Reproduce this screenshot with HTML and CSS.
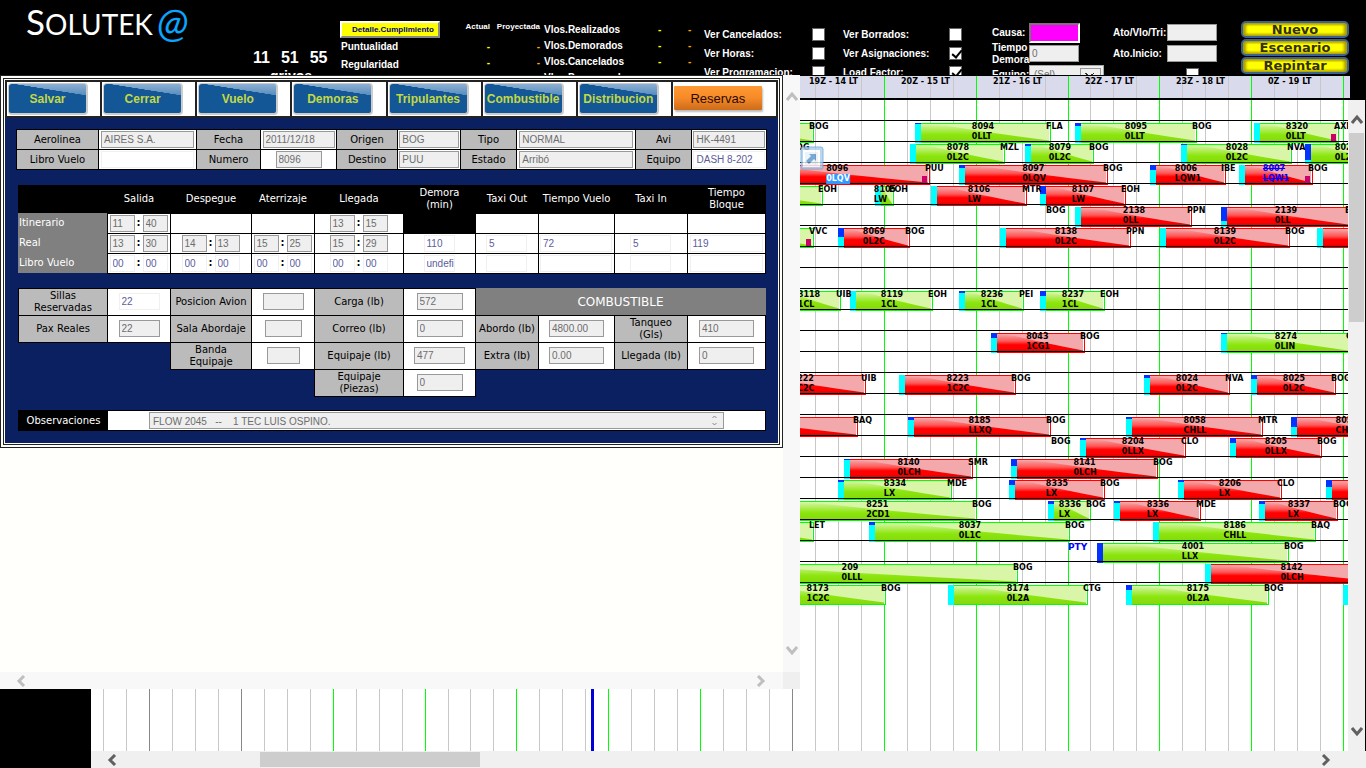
FILE: index.html
```html
<!DOCTYPE html>
<html lang="es">
<head>
    <meta charset="UTF-8">
    <meta name="viewport" content="width=device-width, initial-scale=1.0">
    <title>Solutek@</title>
    <link rel="stylesheet" href="styles.css">
</head>
<body>
    <header class="topbar">
        <div class="logo"><span class="logo-cap">S</span>OLUTEK<span class="logo-at">@</span></div>

        <div class="clock">
            <div class="clock-time"><span>11</span><span>51</span><span>55</span></div>
            <div class="clock-note">grivos</div>
        </div>

        <div class="stats">
            <button type="button" class="btn-detail">Detalle.Cumplimiento</button>
            <div>Puntualidad</div>
            <div>Regularidad</div>
            <div>Factor Ocupac.</div>
        </div>

        <div class="ratios">
            <span class="ratio-head">Actual</span><span class="ratio-head">Proyectada</span>
            <span class="now">-</span><span class="proj">-</span>
            <span class="now">-</span><span class="proj">-</span>
        </div>

        <div class="flights">
            <span>Vlos.Realizados</span><span class="now">-</span><span class="proj">-</span>
            <span>Vlos.Demorados</span><span class="now">-</span><span class="proj">-</span>
            <span>Vlos.Cancelados</span><span class="now">-</span><span class="proj">-</span>
            <span>Vlos.Programados</span><span class="now">-</span><span class="proj">-</span>
        </div>

        <div class="checks">
            <label for="verCancelados">Ver Cancelados:</label><input type="checkbox" id="verCancelados">
            <label for="verBorrados">Ver Borrados:</label><input type="checkbox" id="verBorrados">
            <label for="verHoras">Ver Horas:</label><input type="checkbox" id="verHoras">
            <label for="verAsignaciones">Ver Asignaciones:</label><input type="checkbox" id="verAsignaciones" checked>
            <label for="verProgramacion">Ver Programacion:</label><input type="checkbox" id="verProgramacion">
            <label for="loadFactor">Load Factor:</label><input type="checkbox" id="loadFactor" checked>
        </div>

        <div class="filters">
            <label for="causa">Causa:</label><input type="text" id="causa" class="causa">
            <label for="ato">Ato/Vlo/Tri:</label><input type="text" id="ato" disabled>
            <label for="tiempoDemora">Tiempo Demora</label><input type="text" id="tiempoDemora" value="0" disabled>
            <label for="atoInicio">Ato.Inicio:</label><input type="text" id="atoInicio" disabled>
            <label for="equipoSel">Equipo:</label>
            <div class="select-box"><select id="equipoSel"><option>(Sel)</option></select></div>
            <span></span><input type="checkbox" class="center" aria-label="Inicio">
        </div>

        <div class="actions">
            <button type="button">Nuevo</button>
            <button type="button">Escenario</button>
            <button type="button">Repintar</button>
        </div>
    </header>

    <main class="workspace">
        <div class="aircraft"></div>
        <div class="board">
            <div class="hours-wrap"><div class="hours" id="hours"></div></div>
            <div class="board-body">
                <div class="chart" id="chart"></div>
                <div class="vscroll">
                    <svg width="12" height="12" viewBox="0 0 12 12"><path d="M1 9 L6 3 L11 9"/></svg>
                    <div class="vthumb"></div>
                    <svg class="last" width="12" height="12" viewBox="0 0 12 12"><path d="M1 3 L6 9 L11 3"/></svg>
                </div>
            </div>
            <div class="hscroll">
                <svg width="12" height="12" viewBox="0 0 12 12"><path d="M9 1 L4 6 L9 11"/></svg>
                <div class="hthumb"></div>
                <svg class="last" width="12" height="12" viewBox="0 0 12 12"><path d="M3 1 L8 6 L3 11"/></svg>
            </div>
        </div>

        <section class="dialog">
            <div class="dialog-row">
                <div class="dialog-page">
                    <form class="flight-form">
                        <nav class="toolbar">
                            <div><button type="button">Salvar</button></div>
                            <div><button type="button">Cerrar</button></div>
                            <div><button type="button">Vuelo</button></div>
                            <div><button type="button">Demoras</button></div>
                            <div><button type="button">Tripulantes</button></div>
                            <div><button type="button">Combustible</button></div>
                            <div><button type="button">Distribucion</button></div>
                            <div><button type="button" class="reservas">Reservas</button></div>
                        </nav>

                        <div class="form-body">
                            <table class="info">
                                <colgroup>
                                    <col class="c82"><col class="c98"><col class="c64"><col class="c76"><col class="c61"><col class="c63"><col class="c56"><col class="c119"><col class="c56"><col class="c75">
                                </colgroup>
                                <tr>
                                    <th><label for="aerolinea">Aerolinea</label></th>
                                    <td><input type="text" id="aerolinea" value="AIRES S.A." disabled></td>
                                    <th><label for="fecha">Fecha</label></th>
                                    <td><input type="text" id="fecha" value="2011/12/18" disabled></td>
                                    <th><label for="origen">Origen</label></th>
                                    <td><input type="text" id="origen" value="BOG" disabled></td>
                                    <th><label for="tipo">Tipo</label></th>
                                    <td><input type="text" id="tipo" value="NORMAL" disabled></td>
                                    <th><label for="avi">Avi</label></th>
                                    <td><input type="text" id="avi" value="HK-4491" disabled></td>
                                </tr>
                                <tr>
                                    <th><label for="libro">Libro Vuelo</label></th>
                                    <td><input type="text" id="libro"></td>
                                    <th><label for="numero">Numero</label></th>
                                    <td><input type="text" id="numero" class="w46" value="8096" disabled></td>
                                    <th><label for="destino">Destino</label></th>
                                    <td><input type="text" id="destino" value="PUU" disabled></td>
                                    <th><label for="estado">Estado</label></th>
                                    <td><input type="text" id="estado" value="Arribó" disabled></td>
                                    <th><label for="equipo">Equipo</label></th>
                                    <td><input type="text" id="equipo" value="DASH 8-202"></td>
                                </tr>
                            </table>

                            <table class="times">
                                <colgroup>
                                    <col class="c89"><col class="c63"><col class="c81"><col class="c63"><col class="c89"><col class="c72"><col class="c63"><col class="c76"><col class="c73"><col class="c78">
                                </colgroup>
                                <tr class="head">
                                    <th></th><th>Salida</th><th>Despegue</th><th>Aterrizaje</th><th>Llegada</th><th>Demora<br>(min)</th><th>Taxi Out</th><th>Tiempo Vuelo</th><th>Taxi In</th><th>Tiempo<br>Bloque</th>
                                </tr>
                                <tr>
                                    <th>Itinerario</th>
                                    <td><input type="text" class="w25" value="11" aria-label="Hora salida" disabled><b>:</b><input type="text" class="w25" value="40" aria-label="Minuto salida" disabled></td>
                                    <td></td>
                                    <td></td>
                                    <td><input type="text" class="w25" value="13" aria-label="Hora llegada" disabled><b>:</b><input type="text" class="w25" value="15" aria-label="Minuto llegada" disabled></td>
                                    <td class="dark"></td>
                                    <td></td>
                                    <td></td>
                                    <td></td>
                                    <td></td>
                                </tr>
                                <tr>
                                    <th>Real</th>
                                    <td><input type="text" class="w25" value="13" aria-label="Hora salida real" disabled><b>:</b><input type="text" class="w25" value="30" aria-label="Minuto salida real" disabled></td>
                                    <td><input type="text" class="w25" value="14" aria-label="Hora despegue real" disabled><b>:</b><input type="text" class="w25" value="13" aria-label="Minuto despegue real" disabled></td>
                                    <td><input type="text" class="w25" value="15" aria-label="Hora aterrizaje real" disabled><b>:</b><input type="text" class="w25" value="25" aria-label="Minuto aterrizaje real" disabled></td>
                                    <td><input type="text" class="w25" value="15" aria-label="Hora llegada real" disabled><b>:</b><input type="text" class="w25" value="29" aria-label="Minuto llegada real" disabled></td>
                                    <td><input type="text" class="w30" value="110" aria-label="Demora real"></td>
                                    <td><input type="text" class="w41" value="5" aria-label="Taxi out real"></td>
                                    <td><input type="text" value="72" aria-label="Tiempo vuelo real"></td>
                                    <td><input type="text" class="w41" value="5" aria-label="Taxi in real"></td>
                                    <td><input type="text" class="w73" value="119" aria-label="Tiempo bloque real"></td>
                                </tr>
                                <tr>
                                    <th>Libro Vuelo</th>
                                    <td><input type="text" class="w25" value="00" aria-label="Hora salida libro"><b>:</b><input type="text" class="w25" value="00" aria-label="Minuto salida libro"></td>
                                    <td><input type="text" class="w25" value="00" aria-label="Hora despegue libro"><b>:</b><input type="text" class="w25" value="00" aria-label="Minuto despegue libro"></td>
                                    <td><input type="text" class="w25" value="00" aria-label="Hora aterrizaje libro"><b>:</b><input type="text" class="w25" value="00" aria-label="Minuto aterrizaje libro"></td>
                                    <td><input type="text" class="w25" value="00" aria-label="Hora llegada libro"><b>:</b><input type="text" class="w25" value="00" aria-label="Minuto llegada libro"></td>
                                    <td><input type="text" class="w30" value="undefi" aria-label="Demora libro"></td>
                                    <td><input type="text" class="w41" aria-label="Taxi out libro"></td>
                                    <td><input type="text" aria-label="Tiempo vuelo libro"></td>
                                    <td><input type="text" class="w41" aria-label="Taxi in libro"></td>
                                    <td><input type="text" class="w73" aria-label="Tiempo bloque libro"></td>
                                </tr>
                            </table>

                            <table class="load">
                                <colgroup>
                                    <col class="c89"><col class="c63"><col class="c81"><col class="c63"><col class="c89"><col class="c72"><col class="c63"><col class="c76"><col class="c73"><col class="c78">
                                </colgroup>
                                <tr>
                                    <th><label for="sillas">Sillas<br>Reservadas</label></th>
                                    <td><input type="text" id="sillas" class="w41" value="22"></td>
                                    <th><label for="posicion">Posicion Avion</label></th>
                                    <td><input type="text" id="posicion" class="w41" disabled></td>
                                    <th><label for="carga">Carga (lb)</label></th>
                                    <td><input type="text" id="carga" class="w46" value="572" disabled></td>
                                    <th colspan="4" class="fuel">COMBUSTIBLE</th>
                                </tr>
                                <tr>
                                    <th><label for="pax">Pax Reales</label></th>
                                    <td><input type="text" id="pax" class="w41" value="22" disabled></td>
                                    <th><label for="sala">Sala Abordaje</label></th>
                                    <td><input type="text" id="sala" class="w37" disabled></td>
                                    <th><label for="correo">Correo (lb)</label></th>
                                    <td><input type="text" id="correo" class="w46" value="0" disabled></td>
                                    <th><label for="abordo">Abordo (lb)</label></th>
                                    <td><input type="text" id="abordo" class="w55" value="4800.00" disabled></td>
                                    <th><label for="tanqueo">Tanqueo<br>(Gls)</label></th>
                                    <td><input type="text" id="tanqueo" class="w55" value="410" disabled></td>
                                </tr>
                                <tr>
                                    <td colspan="2" class="none"></td>
                                    <th><label for="banda">Banda<br>Equipaje</label></th>
                                    <td><input type="text" id="banda" class="w33" disabled></td>
                                    <th><label for="equipaje">Equipaje (lb)</label></th>
                                    <td><input type="text" id="equipaje" class="w51" value="477" disabled></td>
                                    <th><label for="extra">Extra (lb)</label></th>
                                    <td><input type="text" id="extra" class="w55" value="0.00" disabled></td>
                                    <th><label for="llegada">Llegada (lb)</label></th>
                                    <td><input type="text" id="llegada" class="w55" value="0" disabled></td>
                                </tr>
                                <tr>
                                    <td colspan="4" class="none"></td>
                                    <th><label for="piezas">Equipaje<br>(Piezas)</label></th>
                                    <td><input type="text" id="piezas" class="w46" value="0" disabled></td>
                                    <td colspan="4" class="none"></td>
                                </tr>
                            </table>

                            <div class="notes">
                                <label for="observaciones">Observaciones</label>
                                <div class="notes-field">
                                    <textarea id="observaciones" rows="1" disabled>FLOW 2045   --    1 TEC LUIS OSPINO.</textarea>
                                    <svg width="5" height="11" viewBox="0 0 5 11"><path d="M0.5 3 L2.5 1 L4.5 3 M0.5 8 L2.5 10 L4.5 8"/></svg>
                                </div>
                            </div>
                        </div>
                    </form>
                </div>
                <div class="dialog-vscroll">
                    <svg width="12" height="12" viewBox="0 0 12 12"><path d="M1 9 L6 3 L11 9"/></svg>
                    <svg width="12" height="12" viewBox="0 0 12 12"><path d="M1 3 L6 9 L11 3"/></svg>
                </div>
            </div>
            <div class="dialog-foot">
                <div class="dialog-hscroll">
                    <svg width="12" height="12" viewBox="0 0 12 12"><path d="M9 1 L4 6 L9 11"/></svg>
                    <svg width="12" height="12" viewBox="0 0 12 12"><path d="M3 1 L8 6 L3 11"/></svg>
                </div>
                <div class="dialog-corner"></div>
            </div>
        </section>

        <a href="#" class="open-link" aria-label="Abrir">
            <svg width="24" height="24" viewBox="0 0 24 24">
                <rect class="link-box" x="1" y="1" width="22" height="22" rx="2"/>
                <rect class="link-page" x="4" y="5" width="15" height="15"/>
                <path class="link-arrow" d="M9 8h7v7l-2-2-5 5-3-3 5-5z"/>
            </svg>
        </a>
    </main>

    <script src="app.js"></script>
</body>
</html>
```
FILE: styles.css
```css
* {
    box-sizing: border-box;
}
body {
    display: flex;
    flex-direction: column;
    height: 100vh;
    margin: 0;
    overflow: hidden;
    background-color: #000;
    font-family: "Liberation Sans", Arial, sans-serif;
    font-size: 10px;
}
button, input, select, textarea {
    margin: 0;
    font-family: inherit;
}
svg {
    display: block;
    flex: none;
}

/* Barra superior */
.topbar {
    display: grid;
    grid-template-columns: 253px 87px 126px 78px 160px 288px 249px 1fr;
    flex: none;
    height: 75px;
    overflow: hidden;
    color: #fff;
    font-weight: bold;
}
.logo {
    padding: 1px 0 0 26px;
    font-family: Lato, sans-serif;
    font-weight: 400;
    font-size: 28px;
    line-height: 40px;
    white-space: nowrap;
}
.logo-cap {
    font-size: 35px;
}
.logo-at {
    margin-left: 4px;
    color: #0aa5ff;
    font-size: 41px;
    font-style: italic;
    vertical-align: -2px;
}
.clock {
    padding-top: 48px;
}
.clock-time {
    display: flex;
    gap: 11px;
    font-size: 16px;
    line-height: 20px;
}
.clock-note {
    padding-left: 17px;
    font-size: 14px;
    line-height: 16px;
}
.stats {
    padding-top: 21px;
    line-height: 18px;
}
.stats div {
    padding-left: 1px;
}
.btn-detail {
    display: block;
    width: 100px;
    height: 17px;
    padding: 0 0 0 6px;
    border: 2px solid;
    border-color: #fff #888 #888 #fff;
    background-color: #ff0;
    color: #000080;
    font-size: 8px;
    font-weight: bold;
    white-space: nowrap;
}
.ratios {
    display: grid;
    grid-template-columns: 24px 50px;
    grid-template-rows: 20px 16px 16px;
    justify-items: end;
    align-content: start;
    padding-top: 19px;
    line-height: 16px;
}
.ratio-head {
    font-size: 8px;
}
.now {
    color: #ff0;
}
.proj {
    color: #ffa500;
}
.flights {
    display: grid;
    grid-template-columns: 114px 30px 16px;
    grid-auto-rows: 16px;
    align-content: start;
    padding-top: 22px;
    line-height: 16px;
}
.checks {
    display: grid;
    grid-template-columns: 108px 31px 106px 13px;
    grid-auto-rows: 19px;
    align-content: start;
    align-items: center;
    padding-top: 25px;
}
.topbar input[type="checkbox"] {
    position: relative;
    appearance: none;
    width: 13px;
    height: 13px;
    border: 1px solid #666;
    background-color: #fff;
}
.topbar input[type="checkbox"]:checked::after {
    content: "";
    position: absolute;
    top: 0;
    left: 4px;
    width: 4px;
    height: 8px;
    border: solid #000;
    border-width: 0 2px 2px 0;
    transform: rotate(40deg);
}
.topbar .center {
    justify-self: center;
}
.filters {
    display: grid;
    grid-template-columns: 37px 84px 54px 51px;
    grid-auto-rows: 21px;
    align-content: start;
    align-items: center;
    padding-top: 22px;
    line-height: 12px;
}
.filters label {
    white-space: nowrap;
}
.filters label[for="tiempoDemora"] {
    white-space: normal;
}
.filters input[type="text"] {
    width: 50px;
    height: 17px;
    padding: 0 2px;
    border: 1px solid #999;
    background-color: #efefef;
    color: #6d6d6d;
    font-size: 10px;
}
.filters input.causa {
    width: 51px;
    height: 20px;
    border: 2px solid;
    border-color: #777 #fff #fff #777;
    background-color: #f0f;
}
.select-box {
    position: relative;
    width: 75px;
}
.select-box select {
    appearance: none;
    display: block;
    width: 75px;
    height: 19px;
    padding: 0 4px;
    border: 1px solid #aaa;
    border-radius: 0;
    background-color: #efefef;
    color: #6d6d6d;
    font-size: 10px;
}
.select-box::after {
    content: "";
    position: absolute;
    top: 3px;
    right: 3px;
    width: 19px;
    height: 14px;
    border: 1px solid #999;
    background: linear-gradient(45deg, transparent 42%, #333 42%, #333 60%, transparent 60%) 4px 4px / 5px 5px no-repeat,
        linear-gradient(-45deg, transparent 42%, #333 42%, #333 60%, transparent 60%) 8px 4px / 5px 5px no-repeat;
}
.actions {
    display: flex;
    flex-direction: column;
    gap: 1px;
    padding-top: 21px;
}
.actions button {
    width: 108px;
    height: 17px;
    padding: 0;
    border: 2px solid #3b6293;
    border-radius: 5px;
    background: linear-gradient(#b4aa00, #ff0 28%, #ff0 70%, #c0b400);
    box-shadow: inset 3px 0 3px #a89c00, inset -3px 0 3px #a89c00;
    color: #33300a;
    font-family: "DejaVu Sans", Verdana, sans-serif;
    font-size: 13px;
    font-weight: bold;
    line-height: 12px;
}

/* Programacion */
.workspace {
    position: relative;
    display: flex;
    flex: 1;
    min-height: 0;
}
.aircraft {
    flex: none;
    width: 91px;
}
.board {
    display: flex;
    flex: 1;
    flex-direction: column;
    min-width: 0;
    font-family: "DejaVu Sans", Verdana, sans-serif;
    font-size: 8px;
    font-weight: bold;
}
.hours-wrap {
    flex: none;
    padding: 1px 16px 2px 0;
}
.hours {
    position: relative;
    height: 22px;
    overflow: hidden;
    background-color: #d9dbec;
}
.hours span {
    position: absolute;
    top: 0;
    line-height: 11px;
    white-space: nowrap;
}
.board-body {
    display: flex;
    flex: 1;
    min-height: 0;
    background-color: #fff;
}
.chart {
    position: relative;
    flex: 1;
    overflow: hidden;
}
.tick, .row-line, .now-line {
    position: absolute;
    background-color: #c8c8c8;
}
.tick {
    top: 0;
    bottom: 0;
    width: 1px;
}
.tick.hour {
    background-color: #0f0;
}
.tick.night {
    background-color: #888;
}
.row-line {
    left: 0;
    right: 0;
    height: 1px;
    background-color: #000;
}
.now-line {
    top: 0;
    bottom: 0;
    width: 3px;
    background-color: #0000d8;
}
.bar {
    position: absolute;
    height: 20px;
    border: 1px solid;
    border-left: none;
}
.bar::before {
    content: "";
    position: absolute;
    inset: 0 1px 0 6px;
    clip-path: polygon(0 0, 20% 10%, 45% 38%, 75% 68%, 100% 92%, 100% 100%, 0 100%);
}
.bar.green {
    border-color: #0f0;
    background-color: #d8f5a8;
}
.bar.green::before {
    background: linear-gradient(#d8f5a8, #8be60c 60%, #85d80e);
}
.bar.red {
    border-color: #f00;
    background-color: #f3a9ab;
}
.bar.red::before {
    background: linear-gradient(#f3a9ab, #f55 40%, #f00 60%, #f00 80%, #c80808);
}
.bar::after {
    content: "";
    position: absolute;
    top: 0;
    right: 0;
    bottom: 0;
    width: 1px;
    background-color: #fff;
}
.mark {
    position: absolute;
    top: -1px;
    left: 0;
    width: 6px;
    height: 20px;
    background-color: #0ff;
}
.mark i {
    display: block;
    background-color: #0433ff;
}
.alert {
    position: absolute;
    right: 2px;
    bottom: 1px;
    width: 5px;
    height: 7px;
    background-color: #cc0066;
}
.tag {
    position: absolute;
    color: #000;
    line-height: 10px;
    white-space: nowrap;
}
.tag.cancelled {
    color: #00f;
    text-decoration: line-through;
}
.tag .picked {
    background-color: #3399ff;
    color: #fff;
}
.tag.ferry {
    color: #00f;
    font-size: 9px;
    font-weight: bold;
}
.tag.two {
    transform: translateX(-50%);
}
.tag.two span {
    display: table;
}
svg path {
    fill: none;
    stroke: #606060;
    stroke-width: 3;
}
.vscroll {
    display: flex;
    flex: none;
    flex-direction: column;
    align-items: center;
    width: 18px;
    padding: 14px 0;
    border-right: 1px solid #000;
    background-color: #f0f0f0;
}
.vthumb {
    width: 15px;
    height: 189px;
    margin-top: 7px;
    background-color: #cdcdcd;
}
.vscroll .last {
    margin-top: auto;
}
.hscroll {
    display: flex;
    flex: none;
    align-items: center;
    height: 17px;
    padding: 0 34px 0 15px;
    background-color: #f0f0f0;
}
.hthumb {
    width: 220px;
    height: 15px;
    margin-left: 142px;
    background-color: #cdcdcd;
}
.hscroll .last {
    margin-left: auto;
}
.open-link {
    position: absolute;
    top: 71px;
    left: 800px;
    opacity: 0.8;
}
.link-box {
    fill: #a9cdec;
    stroke: #6fa3d4;
}
.link-page {
    fill: #e8f2fb;
    stroke: #fff;
    stroke-width: 2;
}
svg .link-arrow {
    fill: #5b93c9;
    stroke: none;
}

/* Ventana del vuelo */
.dialog {
    position: absolute;
    top: 0;
    left: 0;
    display: flex;
    flex-direction: column;
    width: 800px;
    height: 614px;
    background-color: #fffffb;
}
.dialog-row {
    display: flex;
    flex: 1;
}
.dialog-page {
    flex: 1;
}
.dialog-vscroll {
    display: flex;
    flex-direction: column;
    justify-content: space-between;
    align-items: center;
    width: 17px;
    padding: 16px 0;
    background-color: #f8f8f8;
}
.dialog-foot {
    display: flex;
    height: 17px;
}
.dialog-hscroll {
    display: flex;
    flex: 1;
    justify-content: space-between;
    align-items: center;
    padding: 0 16px 0 15px;
    background-color: #f8f8f8;
}
.dialog-corner {
    width: 17px;
    background-color: #efefef;
}
.dialog-vscroll path, .dialog-hscroll path {
    stroke: #bfbfbf;
}
.flight-form {
    padding: 1px;
    border: 4px double #222;
    font-family: "DejaVu Sans", Verdana, sans-serif;
    font-size: 10px;
}
.toolbar {
    display: grid;
    grid-template-columns: repeat(8, minmax(0, 1fr));
    padding-right: 10px;
    border: solid #222;
    border-width: 2px 2px 2px 0;
    background-color: #fff;
}
.toolbar div {
    height: 34px;
    padding: 1px;
    border-left: 2px solid #222;
}
.toolbar button {
    width: 80px;
    height: 32px;
    padding: 0;
    border: 1px solid #ccc;
    border-width: 1px 2px 2px 1px;
    border-radius: 4px;
    background: linear-gradient(9deg, #145796 58%, rgba(20, 87, 150, 0) 59%) 0 0 / 100% 15px no-repeat,
        linear-gradient(#8db0d2, #4580b6 15px, #145796 15px);
    color: #c3d944;
    font-family: "Liberation Sans", Arial, sans-serif;
    font-size: 12px;
    font-weight: bold;
    white-space: nowrap;
}
.toolbar .reservas {
    width: 88px;
    height: 24px;
    margin-top: 3px;
    border: none;
    border-radius: 1px;
    background: linear-gradient(#ff9933, #f78a28 50%, #cc6c1a);
    box-shadow: 1px 2px 2px #bbb;
    color: #2b0a00;
    font-size: 13px;
    font-weight: normal;
}
.form-body {
    padding: 11px 11px 12px;
    background-color: #0b2061;
}
table {
    border-collapse: collapse;
    table-layout: fixed;
}
th, td {
    padding: 0;
    border: 1px solid #000;
    line-height: 12px;
    text-align: center;
    font-weight: normal;
    white-space: nowrap;
}
td {
    background-color: #fff;
    font-size: 10px;
}
th {
    background-color: #bbb;
}
td b {
    display: inline-block;
    width: 8px;
    vertical-align: middle;
}
td input {
    width: 96%;
    height: 17px;
    padding: 0 2px;
    border: 1px solid #f0f0f0;
    background-color: #fff;
    color: #5c5c9c;
    vertical-align: middle;
}
td input, .notes textarea {
    font-family: "Liberation Sans", Arial, sans-serif;
    font-size: 10px;
}
td input:disabled {
    border-color: #999;
    background-color: #efefef;
    color: #6d6d6d;
}
.c56 { width: 56px; }
.c61 { width: 61px; }
.c63 { width: 63px; }
.c64 { width: 64px; }
.c72 { width: 72px; }
.c73 { width: 73px; }
.c75 { width: 75px; }
.c76 { width: 76px; }
.c78 { width: 78px; }
.c81 { width: 81px; }
.c82 { width: 82px; }
.c89 { width: 89px; }
.c98 { width: 98px; }
.c119 { width: 119px; }
td .w25 { width: 25px; }
td .w30 { width: 31px; padding-right: 0; }
td .w33 { width: 33px; }
td .w37 { width: 37px; }
td .w41 { width: 41px; }
td .w46 { width: 46px; }
td .w51 { width: 51px; }
td .w55 { width: 55px; }
td .w73 { width: 73px; }
.info {
    width: 750px;
}
.info tr {
    height: 20px;
}
.times {
    width: 747px;
    margin: 15px 0 0 2px;
}
.times tr {
    height: 20px;
}
.times th {
    padding-left: 1px;
    border-top: none;
    border-bottom: none;
    border-left: none;
    background-color: #808080;
    color: #fff;
    text-align: left;
}
.times .head {
    height: 28px;
}
.times .head th {
    background-color: #000;
    text-align: center;
}
.times .dark {
    background-color: #000;
}
.load {
    width: 747px;
    margin: 14px 0 0 2px;
}
.load tr {
    height: 27px;
}
.load .none {
    border: none;
    background-color: transparent;
}
.load .fuel {
    border-top-color: #808080;
    border-right-color: #808080;
    background-color: #808080;
    color: #fff;
    font-size: 12px;
}
.notes {
    display: flex;
    width: 748px;
    height: 21px;
    margin: 13px 0 0 2px;
    border: 1px solid #000;
    background-color: #fff;
}
.notes label {
    width: 89px;
    background-color: #000;
    color: #fff;
    line-height: 20px;
    text-align: center;
}
.notes-field {
    position: relative;
    width: 575px;
    margin: 1px 0 0 41px;
}
.notes textarea {
    display: block;
    width: 100%;
    height: 17px;
    padding: 2px 3px 0;
    border: 1px solid #999;
    overflow: hidden;
    resize: none;
    background-color: #efefef;
    color: #6d6d6d;
    line-height: 13px;
}
.notes-field svg {
    position: absolute;
    top: 3px;
    right: 7px;
}
.notes-field path {
    stroke: #888;
    stroke-width: 1;
}
```
FILE: app.js
```js
const LEFT = 91;          // ancho de la columna de aviones
const FIRST_HOUR = 149;
const HOUR_WIDTH = 91.85;
const ROW_TOP = 20;
const ROW_HEIGHT = 21;
const ROWS = 23;

// fila, inicio, fin, color, vuelo, tripulacion, destino, demora, opciones
const flights = [
    [0, 700, 814, 'green', '', '', 'BOG', 0],
    [0, 915, 1051, 'green', '8094', '0LLT', 'FLA', 1],
    [0, 1075, 1197, 'green', '8095', '0LLT', 'BOG', 3],
    [0, 1254, 1339, 'green', '8320', '0LLT', 'AXM', 0, 'alert'],
    [1, 910, 1005, 'green', '8078', '0L2C', 'MZL', 0],
    [1, 1025, 1094, 'green', '8079', '0L2C', 'BOG', 2],
    [1, 1181, 1292, 'green', '8028', '0L2C', 'NVA', 1],
    [1, 1305, 1386, 'green', '8029', '0L2C', 'BOG', 16],
    [2, 746, 930, 'red', '8096', '0LQV', 'PUU', 0, 'alert picked'],
    [2, 959, 1108, 'red', '8097', '0LQV', 'BOG', 3],
    [2, 1150, 1226, 'red', '8006', 'LQW1', 'IBE', 5],
    [2, 1239, 1313, 'red', '8007', 'LQW1', 'BOG', 0, 'alert cancelled'],
    [3, 700, 823, 'green', '', '', 'EOH', 0],
    [3, 875, 894, 'green', '8105', 'LW', 'EOH', 0],
    [3, 931, 1027, 'red', '8106', 'LW', 'MTR', 0],
    [3, 1040, 1126, 'red', '8107', 'LW', 'EOH', 8],
    [4, 1075, 1192, 'red', '2138', '0LL', 'PPN', 0],
    [4, 1221, 1350, 'red', '2139', '0LL', 'BOG', 14],
    [5, 700, 814, 'green', '', '', 'VVC', 0, 'alert'],
    [5, 838, 910, 'red', '8069', '0L2C', 'BOG', 9],
    [5, 1000, 1131, 'red', '8138', '0L2C', 'PPN', 0],
    [5, 1160, 1290, 'red', '8139', '0L2C', 'BOG', 0],
    [5, 1317, 1450, 'red', '', '', '', 0],
    [8, 776, 841, 'green', '8118', '1CL', 'UIB', 0],
    [8, 850, 933, 'green', '8119', '1CL', 'EOH', 0],
    [8, 959, 1024, 'green', '8236', '1CL', 'PEI', 2],
    [8, 1040, 1105, 'green', '8237', '1CL', 'EOH', 5],
    [10, 991, 1085, 'red', '8043', '1CG1', 'BOG', 5],
    [10, 1221, 1351, 'green', '8274', '0LIN', 'CLO', 1],
    [12, 740, 866, 'red', '8222', '1C2C', 'UIB', 0],
    [12, 899, 1016, 'red', '8223', '1C2C', 'BOG', 0],
    [12, 1144, 1230, 'red', '8024', '0L2C', 'NVA', 3],
    [12, 1251, 1336, 'red', '8025', '0L2C', 'BOG', 4],
    [14, 700, 858, 'red', '', '', 'BAQ', 0],
    [14, 908, 1051, 'red', '8185', 'LLXQ', 'BOG', 3],
    [14, 1126, 1263, 'red', '8058', 'CHLL', 'MTR', 2],
    [14, 1291, 1403, 'red', '8059', 'CHLL', '', 10],
    [15, 1080, 1186, 'red', '8204', '0LLX', 'CLO', 2],
    [15, 1230, 1322, 'red', '8205', '0LLX', 'BOG', 5],
    [16, 844, 973, 'red', '8140', '0LCH', 'SMR', 1],
    [16, 1011, 1158, 'red', '8141', '0LCH', 'BOG', 7],
    [17, 838, 952, 'green', '8334', 'LX', 'MDE', 2],
    [17, 1009, 1105, 'red', '8335', 'LX', 'BOG', 5],
    [17, 1178, 1282, 'red', '8206', 'LX', 'CLO', 2],
    [17, 1326, 1450, 'red', '', '', '', 7],
    [18, 779, 977, 'green', '8251', '2CD1', 'BOG', 0],
    [18, 1048, 1091, 'green', '8336', 'LX', 'BOG', 3],
    [18, 1114, 1201, 'red', '8336', 'LX', 'MDE', 2],
    [18, 1259, 1338, 'red', '8337', 'LX', 'BOG', 3],
    [19, 700, 814, 'green', '', '', 'LET', 0],
    [19, 869, 1070, 'green', '8037', '0L1C', 'BOG', 3],
    [19, 1153, 1316, 'green', '8186', 'CHLL', 'BAQ', 0],
    [20, 1097, 1289, 'green', '4001', 'LLX', 'BOG', 20],
    [21, 686, 1018, 'green', '209', '0LLL', 'BOG', 0],
    [21, 1205, 1379, 'red', '8142', '0LCH', '', 0],
    [22, 750, 886, 'green', '8173', '1C2C', 'BOG', 0],
    [22, 948, 1088, 'green', '8174', '0L2A', 'CTG', 0],
    [22, 1126, 1269, 'green', '8175', '0L2A', 'BOG', 5],
    [22, 1343, 1450, 'green', '', '', '', 0]
];

// fila, posicion, aeropuerto, clase
const origins = [
    [1, 790, 'BOG', ''],
    [4, 1046, 'BOG', ''],
    [15, 1051, 'BOG', ''],
    [20, 1068, 'PTY', 'ferry']
];

const chart = document.getElementById('chart');
const hours = document.getElementById('hours');

function add(parent, className, style, html) {
    const el = document.createElement('div');
    el.className = className;
    el.style.cssText = style;
    el.innerHTML = html || '';
    parent.appendChild(el);
    return el;
}

function drawTicks(parent) {
    for (let i = -2; i < 53; i++) {
        const x = Math.round(FIRST_HOUR + i * HOUR_WIDTH / 4);
        let type = '';
        if (i % 4 === 0) {
            const hour = i / 4;
            type = (hour < 2 || hour === 7) ? 'night' : 'hour';
        }
        add(parent, 'tick ' + type, `left:${x - LEFT}px`);
    }
}

function drawHours() {
    for (let i = 0; i < 6; i++) {
        const x = Math.round(FIRST_HOUR + (7 + i) * HOUR_WIDTH) + 17;
        const label = document.createElement('span');
        label.style.left = `${x - LEFT}px`;
        label.textContent = `${(19 + i) % 24}Z - ${14 + i} LT`;
        hours.appendChild(label);
    }
}

function drawFlights() {
    flights.forEach(([row, start, end, color, number, crew, dest, delay, flags = '']) => {
        const top = ROW_TOP + row * ROW_HEIGHT + 3;
        let inner = `<div class="mark"><i style="height:${delay}px"></i></div>`;
        if (flags.includes('alert')) {
            inner += '<div class="alert"></div>';
        }
        add(chart, 'bar ' + color, `left:${start - LEFT}px;top:${top}px;width:${end - start}px`, inner);
    });
}

function drawRows() {
    for (let i = 0; i < ROWS; i++) {
        add(chart, 'row-line', `top:${ROW_TOP + i * ROW_HEIGHT}px`);
    }
}

function drawTags() {
    flights.forEach(([row, start, end, color, number, crew, dest, delay, flags = '']) => {
        const top = ROW_TOP + row * ROW_HEIGHT + 2;
        if (number) {
            const middle = Math.round((start + end) / 2) - LEFT;
            const cls = flags.includes('cancelled') ? 'tag two cancelled' : 'tag two';
            const picked = flags.includes('picked') ? 'picked' : '';
            add(chart, cls, `left:${middle}px;top:${top}px`, `<span>${number}</span><span class="${picked}">${crew}</span>`);
        }
        add(chart, 'tag', `left:${end - 5 - LEFT}px;top:${top}px`, dest);
    });
    origins.forEach(([row, x, airport, cls]) => {
        add(chart, 'tag ' + cls, `left:${x - LEFT}px;top:${ROW_TOP + row * ROW_HEIGHT + 2}px`, airport);
    });
}

drawTicks(hours);
drawHours();
drawTicks(chart);
drawFlights();
drawRows();
drawTags();
add(chart, 'now-line', `left:${591 - LEFT}px`);
```
